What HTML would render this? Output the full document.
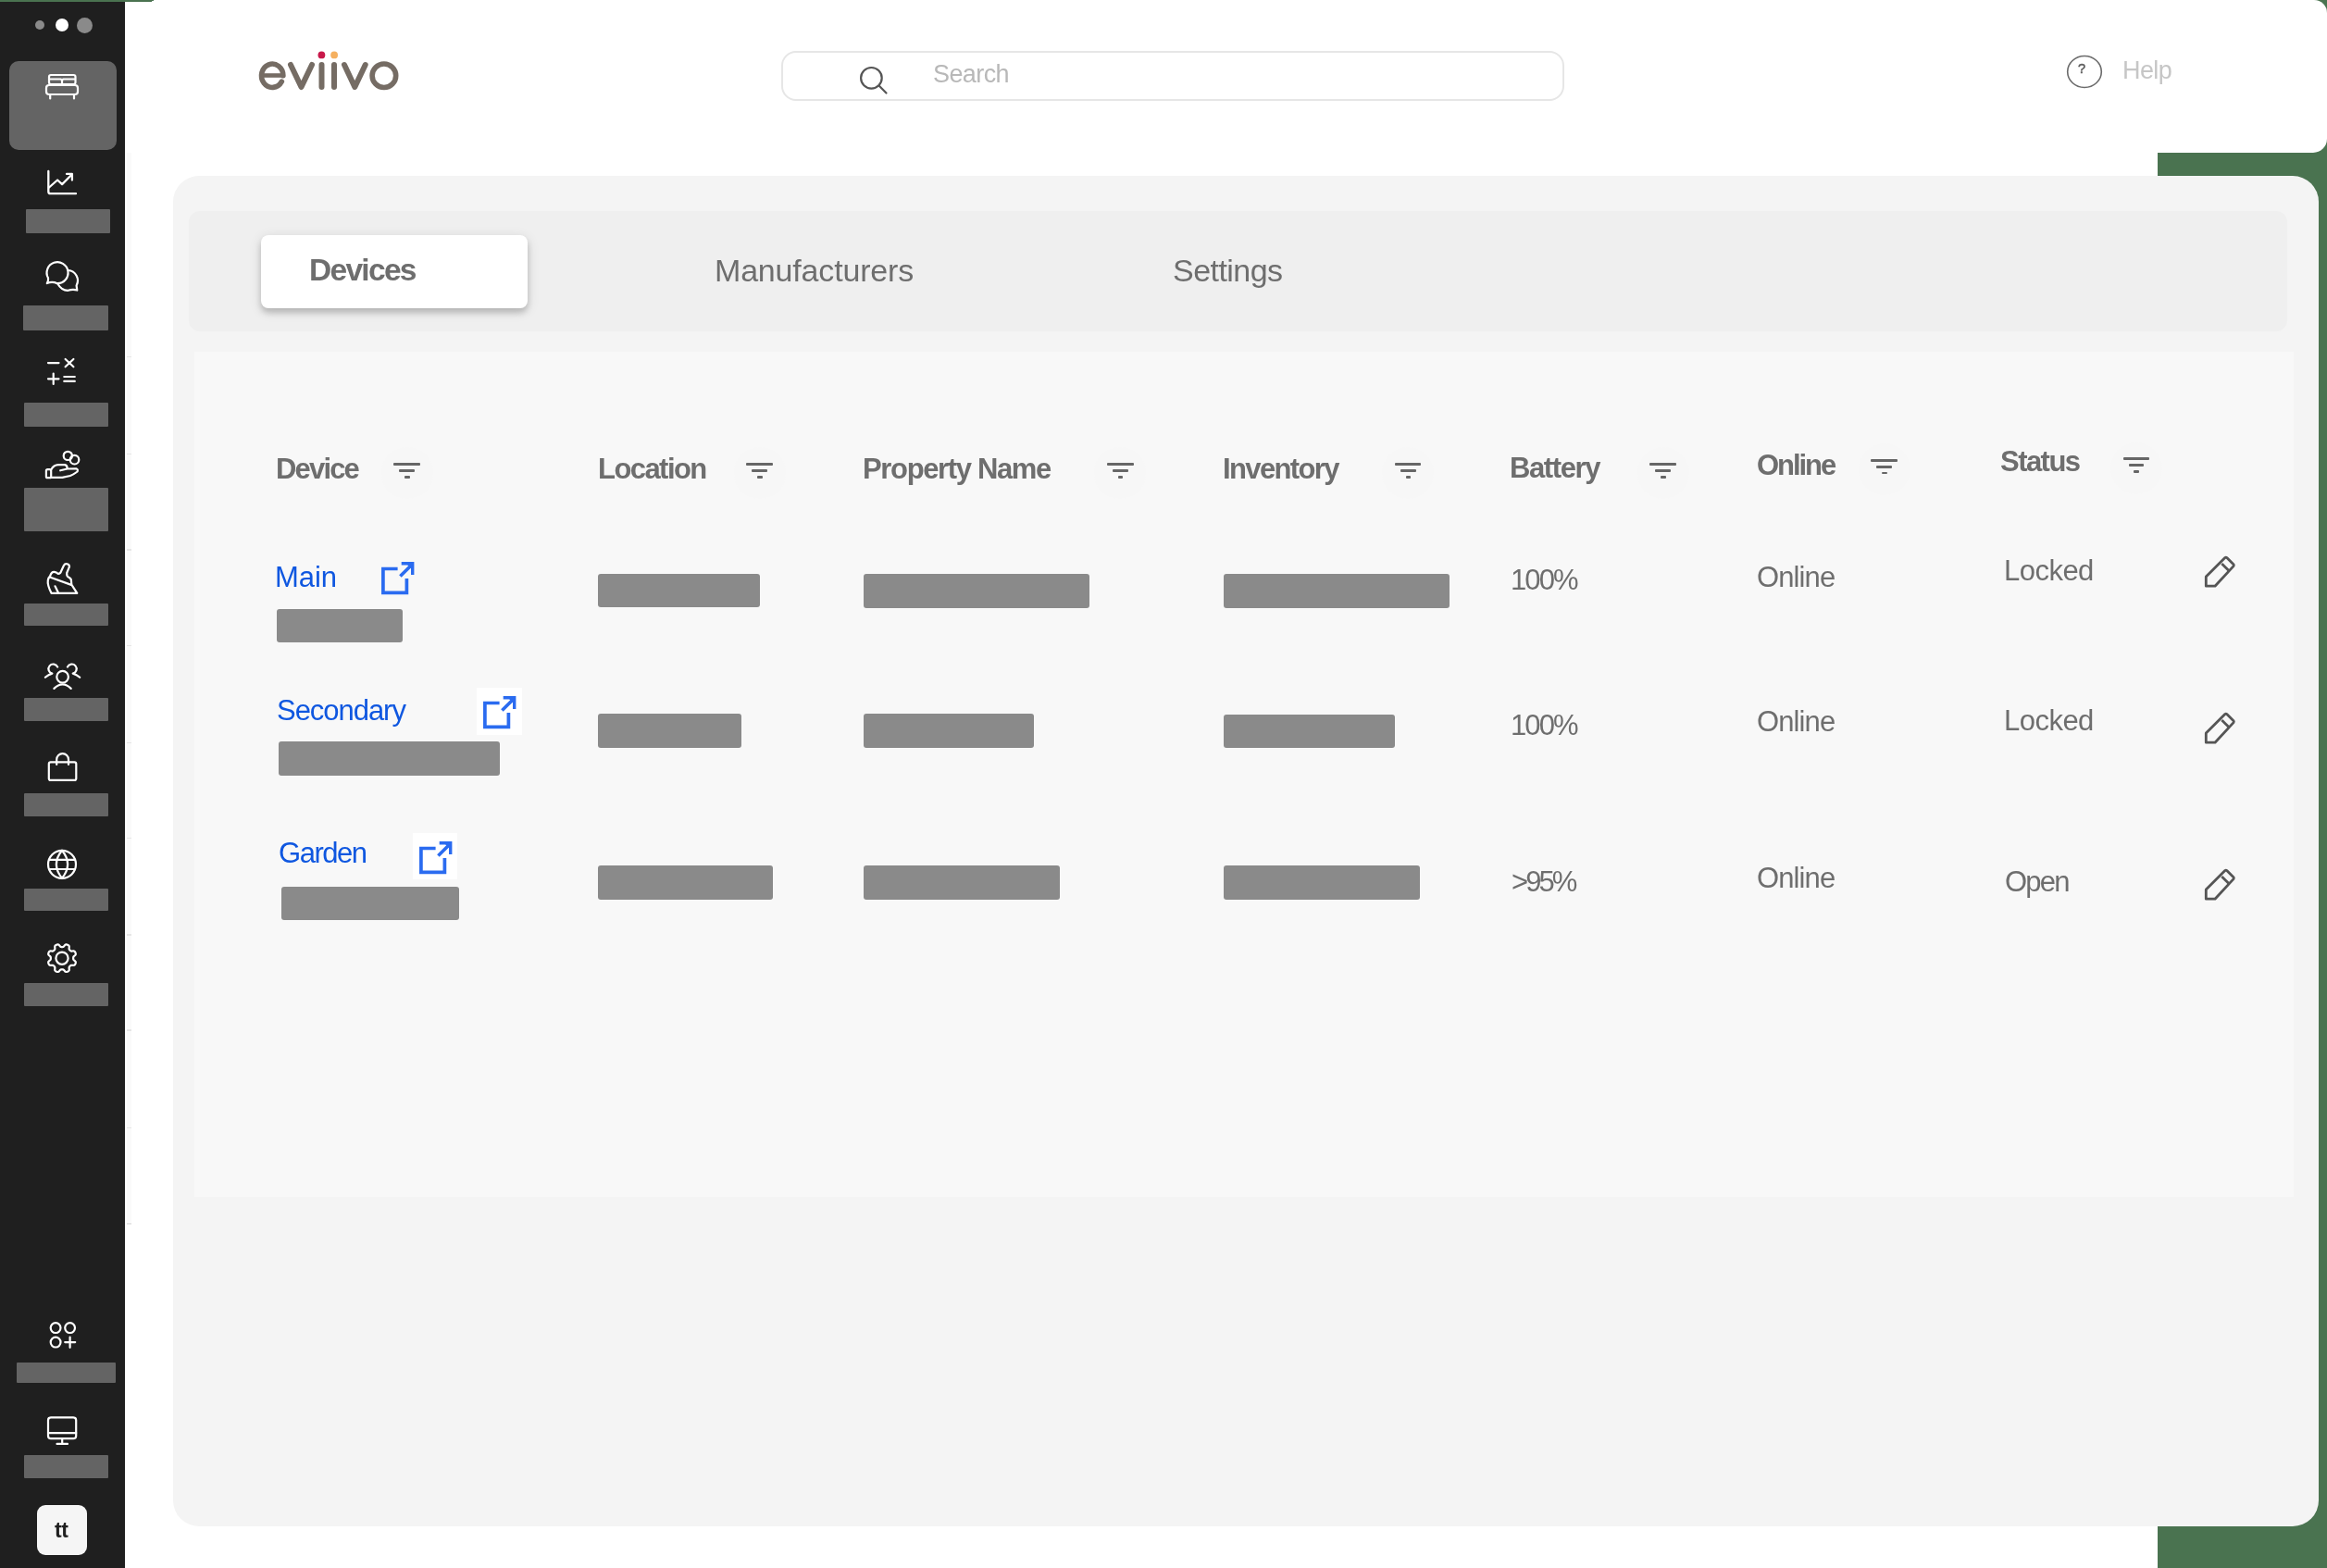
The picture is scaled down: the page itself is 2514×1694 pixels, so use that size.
<!DOCTYPE html>
<html><head><meta charset="utf-8"><style>
html,body{margin:0;padding:0;}
body{width:2514px;height:1694px;position:relative;overflow:hidden;background:#ffffff;font-family:"Liberation Sans",sans-serif;}
.r{position:absolute;}
.t{position:absolute;white-space:nowrap;will-change:transform;}
</style></head><body>
<div class="r" style="left:2331.0px;top:0.0px;width:183.0px;height:1694.0px;background:#4a7350;border-radius:0px;"></div>
<div class="r" style="left:0.0px;top:2.0px;width:135.0px;height:1692.0px;background:#1f1f1f;border-radius:0px;"></div>
<div class="r" style="left:135.0px;top:0.0px;width:2378.5px;height:165.0px;background:#ffffff;border-radius:0px;border-radius:0 14px 15px 0;"></div>
<div class="r" style="left:0.0px;top:0.0px;width:164.0px;height:2.0px;background:#4a7350;border-radius:0px;"></div>
<div class="r" style="left:164.0px;top:0.0px;width:2.0px;height:1.0px;background:#4a7350;border-radius:0px;"></div>
<div class="r" style="left:137.0px;top:165.0px;width:5.0px;height:1155.0px;background:#fafafa;border-radius:0px;"></div>
<div class="r" style="left:137.0px;top:385.1px;width:5.0px;height:1.4px;background:#e6e6e6;border-radius:0px;"></div>
<div class="r" style="left:137.0px;top:489.6px;width:5.0px;height:1.4px;background:#e6e6e6;border-radius:0px;"></div>
<div class="r" style="left:137.0px;top:593.3px;width:5.0px;height:1.4px;background:#e6e6e6;border-radius:0px;"></div>
<div class="r" style="left:137.0px;top:696.8px;width:5.0px;height:1.4px;background:#e6e6e6;border-radius:0px;"></div>
<div class="r" style="left:137.0px;top:802.0px;width:5.0px;height:1.4px;background:#e6e6e6;border-radius:0px;"></div>
<div class="r" style="left:137.0px;top:904.8px;width:5.0px;height:1.4px;background:#e6e6e6;border-radius:0px;"></div>
<div class="r" style="left:137.0px;top:1009.3px;width:5.0px;height:1.4px;background:#e6e6e6;border-radius:0px;"></div>
<div class="r" style="left:137.0px;top:1112.3px;width:5.0px;height:1.4px;background:#e6e6e6;border-radius:0px;"></div>
<div class="r" style="left:137.0px;top:1217.8px;width:5.0px;height:1.4px;background:#e6e6e6;border-radius:0px;"></div>
<div class="r" style="left:137.0px;top:1321.3px;width:5.0px;height:1.4px;background:#e6e6e6;border-radius:0px;"></div>
<div class="r" style="left:187.0px;top:190.0px;width:2318.0px;height:1458.5px;background:#f4f4f4;border-radius:28px;"></div>
<div class="r" style="left:204.0px;top:228.0px;width:2267.0px;height:130.0px;background:#efefef;border-radius:12px;"></div>
<div class="r" style="left:282.0px;top:254.0px;width:288.0px;height:78.5px;background:#ffffff;border-radius:8px;box-shadow:0 5px 6px rgba(0,0,0,0.17),0 3px 14px rgba(0,0,0,0.12);"></div>
<div class="r" style="left:210.0px;top:380.0px;width:2268.0px;height:913.0px;background:#f8f8f8;border-radius:0px;"></div>
<div class="r" style="left:38px;top:22px;width:10px;height:10px;border-radius:50%;background:#8a8a8a"></div>
<div class="r" style="left:60px;top:20px;width:14px;height:14px;border-radius:50%;background:#ffffff"></div>
<div class="r" style="left:82.5px;top:18.5px;width:17px;height:17px;border-radius:50%;background:#8a8a8a"></div>
<div class="r" style="left:9.5px;top:66.0px;width:116.2px;height:96.0px;background:#646464;border-radius:10px;"></div>
<div class="r" style="left:27.5px;top:226.0px;width:91.1px;height:26.0px;background:#646464;border-radius:1px;"></div>
<div class="r" style="left:25.0px;top:330.0px;width:92.0px;height:27.0px;background:#646464;border-radius:1px;"></div>
<div class="r" style="left:25.5px;top:434.7px;width:91.1px;height:26.3px;background:#646464;border-radius:1px;"></div>
<div class="r" style="left:25.5px;top:527.0px;width:91.1px;height:46.6px;background:#646464;border-radius:1px;"></div>
<div class="r" style="left:25.5px;top:652.0px;width:91.1px;height:24.0px;background:#646464;border-radius:1px;"></div>
<div class="r" style="left:25.5px;top:754.0px;width:91.1px;height:25.0px;background:#646464;border-radius:1px;"></div>
<div class="r" style="left:25.5px;top:856.7px;width:91.1px;height:25.0px;background:#646464;border-radius:1px;"></div>
<div class="r" style="left:25.5px;top:960.0px;width:91.1px;height:24.0px;background:#646464;border-radius:1px;"></div>
<div class="r" style="left:25.5px;top:1062.0px;width:91.1px;height:24.6px;background:#646464;border-radius:1px;"></div>
<div class="r" style="left:17.6px;top:1471.6px;width:107.4px;height:22.8px;background:#646464;border-radius:1px;"></div>
<div class="r" style="left:26.0px;top:1572.0px;width:90.6px;height:24.6px;background:#646464;border-radius:1px;"></div>
<div class="r" style="left:39.6px;top:1625.6px;width:54.8px;height:54.4px;background:#f5f5f5;border-radius:9px;"></div>
<div class="t" style="left:58.5px;top:1641.5px;font-size:23.00px;line-height:23.00px;color:#1f1f1f;font-weight:700;letter-spacing:-0.50px;">tt</div>
<svg class="r" style="left:0;top:0" width="135" height="1694" viewBox="0 0 135 1694" fill="none" stroke="#ffffff" stroke-width="2.2" stroke-linecap="round" stroke-linejoin="round">
<rect x="53" y="81" width="28.5" height="10" rx="2"/>
<path d="M53.5,85.5 H66 L67,87 L68,85.5 H81"/>
<path d="M67,86 V91"/>
<rect x="50" y="92" width="34" height="10" rx="3"/>
<path d="M54.2,102.5 V106.5 M80,102.5 V106.5"/>
<path d="M52.3,185 V207 Q52.3,209.2 54.5,209.2 H82" stroke-width="2.3"/>
<path d="M53,202.5 L62.1,194.5 L67.1,199.1 L77.9,188.2 M72,187.9 H77.9 V194.5" stroke-width="2.3"/>
<path d="M52,300.3 A11.5,11.5 0 1 1 61.8,306.2 Q56.5,303.6 50.8,306 Q52.6,303.3 52,300.3 Z"/>
<path d="M73.6,292 A11.2,11.2 0 0 1 82.6,308.5 L83.3,313.6 Q79,311.9 73.5,313.8 Q66.5,314 62.3,306.5"/>
<path d="M52,392.1 H63.5 M70.6,388 L79.4,396.3 M79.4,388 L70.6,396.3 M52,409.3 H63.5 M57.7,403.6 V415 M69.3,407 H80.8 M69.3,411.9 H80.8" stroke-width="2.2"/>
<circle cx="73.3" cy="492.4" r="4.6"/>
<circle cx="80.5" cy="496.7" r="4.8"/>
<rect x="49.9" y="507.2" width="5.3" height="9" rx="1.5"/>
<path d="M55.2,507.5 Q58,502.3 63,502.2 H70 Q72.7,502.5 72.7,506.5 L65.2,508.3 M72.7,506.5 L82.3,506.3 Q84.5,507 83.6,509.5 Q80,512.3 75.9,514 L67.3,515.8 H55.2"/>
<path d="M54.1,622.4 Q55.5,617.6 58.5,617.8 Q61,618.2 62.6,619.8 Q65.3,620 66,617.2 L69,610.8 A3.2,3.2 0 0 1 75,612.2 L72.2,619 Q71.6,622.6 74.8,624 Q77.2,625.2 77,628 L77.3,631.6 L83.3,640.8 H55.5 Q51,632 51.8,627 Q52.3,624 54.1,622.4 Z"/>
<path d="M53.8,623.5 L77,631.9 M59.5,633.3 L63,640.5"/>
<circle cx="67.6" cy="731.2" r="6.3"/>
<path d="M58.4,743.9 Q67.6,735 76.7,743.9"/>
<path d="M62.2,720.6 A5.1,5.1 0 1 0 56.4,727.6 Q52.4,728.6 48.9,731.8"/>
<path d="M72.9,720.6 A5.1,5.1 0 1 1 78.7,727.6 Q82.7,728.6 86.2,731.8"/>
<rect x="52.8" y="823.3" width="29.5" height="19.6" rx="2"/>
<path d="M61.2,826 V820.5 A6.4,6.4 0 0 1 74,820.5 V826"/>
<circle cx="67" cy="933.8" r="15"/>
<path d="M67,918.8 Q54.8,933.8 67,948.8 M67,918.8 Q79.2,933.8 67,948.8"/>
<path d="M53,928.9 H81 M53,939 H81"/>
<path d="M79.15,1035.20 L79.15,1035.52 L79.17,1035.84 L79.20,1036.16 L79.29,1036.49 L79.47,1036.84 L79.81,1037.23 L80.33,1037.67 L80.93,1038.16 L81.42,1038.66 L81.71,1039.14 L81.81,1039.59 L81.80,1040.01 L81.72,1040.41 L81.60,1040.81 L81.46,1041.19 L81.29,1041.56 L81.09,1041.92 L80.86,1042.26 L80.57,1042.57 L80.18,1042.81 L79.65,1042.95 L78.95,1042.96 L78.17,1042.88 L77.49,1042.82 L76.98,1042.86 L76.60,1042.98 L76.31,1043.15 L76.05,1043.35 L75.82,1043.57 L75.59,1043.79 L75.37,1044.02 L75.15,1044.25 L74.95,1044.51 L74.78,1044.80 L74.66,1045.18 L74.62,1045.69 L74.68,1046.37 L74.76,1047.15 L74.75,1047.85 L74.61,1048.38 L74.37,1048.77 L74.06,1049.06 L73.72,1049.29 L73.36,1049.49 L72.99,1049.66 L72.61,1049.80 L72.21,1049.92 L71.81,1050.00 L71.39,1050.01 L70.94,1049.91 L70.46,1049.62 L69.96,1049.13 L69.47,1048.53 L69.03,1048.01 L68.64,1047.67 L68.29,1047.49 L67.96,1047.40 L67.64,1047.37 L67.32,1047.35 L67.00,1047.35 L66.68,1047.35 L66.36,1047.37 L66.04,1047.40 L65.71,1047.49 L65.36,1047.67 L64.97,1048.01 L64.53,1048.53 L64.04,1049.13 L63.54,1049.62 L63.06,1049.91 L62.61,1050.01 L62.19,1050.00 L61.79,1049.92 L61.39,1049.80 L61.01,1049.66 L60.64,1049.49 L60.28,1049.29 L59.94,1049.06 L59.63,1048.77 L59.39,1048.38 L59.25,1047.85 L59.24,1047.15 L59.32,1046.37 L59.38,1045.69 L59.34,1045.18 L59.22,1044.80 L59.05,1044.51 L58.85,1044.25 L58.63,1044.02 L58.41,1043.79 L58.18,1043.57 L57.95,1043.35 L57.69,1043.15 L57.40,1042.98 L57.02,1042.86 L56.51,1042.82 L55.83,1042.88 L55.05,1042.96 L54.35,1042.95 L53.82,1042.81 L53.43,1042.57 L53.14,1042.26 L52.91,1041.92 L52.71,1041.56 L52.54,1041.19 L52.40,1040.81 L52.28,1040.41 L52.20,1040.01 L52.19,1039.59 L52.29,1039.14 L52.58,1038.66 L53.07,1038.16 L53.67,1037.67 L54.19,1037.23 L54.53,1036.84 L54.71,1036.49 L54.80,1036.16 L54.83,1035.84 L54.85,1035.52 L54.85,1035.20 L54.85,1034.88 L54.83,1034.56 L54.80,1034.24 L54.71,1033.91 L54.53,1033.56 L54.19,1033.17 L53.67,1032.73 L53.07,1032.24 L52.58,1031.74 L52.29,1031.26 L52.19,1030.81 L52.20,1030.39 L52.28,1029.99 L52.40,1029.59 L52.54,1029.21 L52.71,1028.84 L52.91,1028.48 L53.14,1028.14 L53.43,1027.83 L53.82,1027.59 L54.35,1027.45 L55.05,1027.44 L55.83,1027.52 L56.51,1027.58 L57.02,1027.54 L57.40,1027.42 L57.69,1027.25 L57.95,1027.05 L58.18,1026.83 L58.41,1026.61 L58.63,1026.38 L58.85,1026.15 L59.05,1025.89 L59.22,1025.60 L59.34,1025.22 L59.38,1024.71 L59.32,1024.03 L59.24,1023.25 L59.25,1022.55 L59.39,1022.02 L59.63,1021.63 L59.94,1021.34 L60.28,1021.11 L60.64,1020.91 L61.01,1020.74 L61.39,1020.60 L61.79,1020.48 L62.19,1020.40 L62.61,1020.39 L63.06,1020.49 L63.54,1020.78 L64.04,1021.27 L64.53,1021.87 L64.97,1022.39 L65.36,1022.73 L65.71,1022.91 L66.04,1023.00 L66.36,1023.03 L66.68,1023.05 L67.00,1023.05 L67.32,1023.05 L67.64,1023.03 L67.96,1023.00 L68.29,1022.91 L68.64,1022.73 L69.03,1022.39 L69.47,1021.87 L69.96,1021.27 L70.46,1020.78 L70.94,1020.49 L71.39,1020.39 L71.81,1020.40 L72.21,1020.48 L72.61,1020.60 L72.99,1020.74 L73.36,1020.91 L73.72,1021.11 L74.06,1021.34 L74.37,1021.63 L74.61,1022.02 L74.75,1022.55 L74.76,1023.25 L74.68,1024.03 L74.62,1024.71 L74.66,1025.22 L74.78,1025.60 L74.95,1025.89 L75.15,1026.15 L75.37,1026.38 L75.59,1026.61 L75.82,1026.83 L76.05,1027.05 L76.31,1027.25 L76.60,1027.42 L76.98,1027.54 L77.49,1027.58 L78.17,1027.52 L78.95,1027.44 L79.65,1027.45 L80.18,1027.59 L80.57,1027.83 L80.86,1028.14 L81.09,1028.48 L81.29,1028.84 L81.46,1029.21 L81.60,1029.59 L81.72,1029.99 L81.80,1030.39 L81.81,1030.81 L81.71,1031.26 L81.42,1031.74 L80.93,1032.24 L80.33,1032.73 L79.81,1033.17 L79.47,1033.56 L79.29,1033.91 L79.20,1034.24 L79.17,1034.56 L79.15,1034.88 L79.15,1035.20Z"/>
<circle cx="67" cy="1035.2" r="6.6"/>
<circle cx="60.1" cy="1434.6" r="5.4" stroke-width="2.2"/>
<circle cx="75.6" cy="1434.6" r="5.4" stroke-width="2.2"/>
<circle cx="60.1" cy="1450.1" r="5.4" stroke-width="2.2"/>
<path d="M70.2,1450.1 H81.2 M75.6,1444.5 V1455.8" stroke-width="2.2"/>
<rect x="52" y="1531.4" width="30.2" height="22.8" rx="3"/>
<path d="M52,1548.1 H82.2 M67.2,1554.5 V1559.6 M61.5,1559.9 H73"/>
</svg>
<svg class="r" style="left:0;top:0" width="500" height="140" viewBox="0 0 500 140" fill="none" stroke="#756c64" stroke-width="6" stroke-linecap="round" stroke-linejoin="round">
<path d="M284,81.5 H305.9" stroke-width="4.6" stroke-linecap="butt"/>
<path d="M305.9,81.8 A11.7,12.7 0 1 0 304.3,88.15" stroke-width="5.6"/>
<path d="M314,70 L325.5,94 L337,70 M347.5,70 V94 M361,70 V94 M372,70 L383.3,94 L394.7,70"/>
<circle cx="414.9" cy="81.75" r="12.8" stroke-width="5.6"/>
<circle cx="347.4" cy="59.4" r="3.9" fill="#c8184a" stroke="none"/>
<circle cx="361.1" cy="59.4" r="3.9" fill="#f5b060" stroke="none"/>
</svg>
<div class="r" style="left:844.4px;top:55.3px;width:846px;height:54px;box-sizing:border-box;border:2.5px solid #e6e6e6;border-radius:16px;background:#fff"></div>
<svg class="r" style="left:0;top:0" width="1000" height="120" viewBox="0 0 1000 120" fill="none" stroke="#555" stroke-width="2.2" stroke-linecap="round">
<circle cx="941.4" cy="84.3" r="11.3"/><path d="M949.6,92.5 L957.5,100.5"/></svg>
<div class="t" style="left:1008.0px;top:66.7px;font-size:27.00px;line-height:27.00px;color:#b8b8b8;font-weight:400;letter-spacing:-0.60px;">Search</div>
<svg class="r" style="left:2200px;top:0" width="120" height="120" viewBox="2200 0 120 120" fill="none" stroke="#6b6b6b" stroke-width="1.6">
<ellipse cx="2252" cy="77.5" rx="18.3" ry="17"/></svg>
<div class="t" style="left:2244.8px;top:66.7px;font-size:14.50px;line-height:14.50px;color:#5a5a5a;font-weight:400;letter-spacing:0.00px;-webkit-text-stroke:0.5px #5a5a5a;">?</div>
<div class="t" style="left:2293.3px;top:63.4px;font-size:27.00px;line-height:27.00px;color:#c6c6c6;font-weight:400;letter-spacing:-0.60px;">Help</div>
<div class="t" style="left:334.0px;top:274.6px;font-size:33.50px;line-height:33.50px;color:#6e6e6e;font-weight:700;letter-spacing:-1.70px;">Devices</div>
<div class="t" style="left:771.5px;top:274.7px;font-size:34.00px;line-height:34.00px;color:#6e6e6e;font-weight:400;letter-spacing:-0.18px;">Manufacturers</div>
<div class="t" style="left:1267.0px;top:274.7px;font-size:34.00px;line-height:34.00px;color:#6e6e6e;font-weight:400;letter-spacing:-0.54px;">Settings</div>
<div class="r" style="left:411.5px;top:483.4px;width:56px;height:56px;border-radius:50%;background:#f7f7f7"></div>
<div class="t" style="left:298.1px;top:491.0px;font-size:31.00px;line-height:31.00px;color:#6e6e6e;font-weight:700;letter-spacing:-1.82px;">Device</div>
<div class="r" style="left:425.3px;top:499.9px;width:28.5px;height:3.0px;background:#666;border-radius:1px;"></div><div class="r" style="left:431.2px;top:507.0px;width:16.9px;height:3.0px;background:#666;border-radius:1px;"></div><div class="r" style="left:437.0px;top:514.1px;width:5.5px;height:2.6px;background:#666;border-radius:1px;"></div>
<div class="r" style="left:792.5px;top:483.4px;width:56px;height:56px;border-radius:50%;background:#f7f7f7"></div>
<div class="t" style="left:645.5px;top:491.0px;font-size:31.00px;line-height:31.00px;color:#6e6e6e;font-weight:700;letter-spacing:-1.56px;">Location</div>
<div class="r" style="left:806.3px;top:499.9px;width:28.5px;height:3.0px;background:#666;border-radius:1px;"></div><div class="r" style="left:812.2px;top:507.0px;width:16.9px;height:3.0px;background:#666;border-radius:1px;"></div><div class="r" style="left:818.0px;top:514.1px;width:5.5px;height:2.6px;background:#666;border-radius:1px;"></div>
<div class="r" style="left:1182.2px;top:483.4px;width:56px;height:56px;border-radius:50%;background:#f7f7f7"></div>
<div class="t" style="left:931.5px;top:491.1px;font-size:31.00px;line-height:31.00px;color:#6e6e6e;font-weight:700;letter-spacing:-1.35px;">Property Name</div>
<div class="r" style="left:1196.0px;top:499.9px;width:28.5px;height:3.0px;background:#666;border-radius:1px;"></div><div class="r" style="left:1201.9px;top:507.0px;width:16.9px;height:3.0px;background:#666;border-radius:1px;"></div><div class="r" style="left:1207.7px;top:514.1px;width:5.5px;height:2.6px;background:#666;border-radius:1px;"></div>
<div class="r" style="left:1493.0px;top:483.4px;width:56px;height:56px;border-radius:50%;background:#f7f7f7"></div>
<div class="t" style="left:1320.9px;top:491.1px;font-size:31.00px;line-height:31.00px;color:#6e6e6e;font-weight:700;letter-spacing:-1.63px;">Inventory</div>
<div class="r" style="left:1506.8px;top:499.9px;width:28.5px;height:3.0px;background:#666;border-radius:1px;"></div><div class="r" style="left:1512.7px;top:507.0px;width:16.9px;height:3.0px;background:#666;border-radius:1px;"></div><div class="r" style="left:1518.5px;top:514.1px;width:5.5px;height:2.6px;background:#666;border-radius:1px;"></div>
<div class="r" style="left:1768.5px;top:483.4px;width:56px;height:56px;border-radius:50%;background:#f7f7f7"></div>
<div class="t" style="left:1631.2px;top:490.3px;font-size:31.00px;line-height:31.00px;color:#6e6e6e;font-weight:700;letter-spacing:-1.40px;">Battery</div>
<div class="r" style="left:1782.3px;top:499.9px;width:28.5px;height:3.0px;background:#666;border-radius:1px;"></div><div class="r" style="left:1788.2px;top:507.0px;width:16.9px;height:3.0px;background:#666;border-radius:1px;"></div><div class="r" style="left:1794.0px;top:514.1px;width:5.5px;height:2.6px;background:#666;border-radius:1px;"></div>
<div class="r" style="left:2007.6000000000001px;top:479.0px;width:56px;height:56px;border-radius:50%;background:#f7f7f7"></div>
<div class="t" style="left:1897.9px;top:486.5px;font-size:31.00px;line-height:31.00px;color:#6e6e6e;font-weight:700;letter-spacing:-2.06px;">Online</div>
<div class="r" style="left:2021.4px;top:495.5px;width:28.5px;height:3.0px;background:#666;border-radius:1px;"></div><div class="r" style="left:2027.3px;top:502.6px;width:16.9px;height:3.0px;background:#666;border-radius:1px;"></div><div class="r" style="left:2033.1px;top:509.7px;width:5.5px;height:2.6px;background:#666;border-radius:1px;"></div>
<div class="r" style="left:2279.7999999999997px;top:477.5px;width:56px;height:56px;border-radius:50%;background:#f7f7f7"></div>
<div class="t" style="left:2160.7px;top:483.3px;font-size:31.00px;line-height:31.00px;color:#6e6e6e;font-weight:700;letter-spacing:-1.54px;">Status</div>
<div class="r" style="left:2293.6px;top:494.0px;width:28.5px;height:3.0px;background:#666;border-radius:1px;"></div><div class="r" style="left:2299.5px;top:501.1px;width:16.9px;height:3.0px;background:#666;border-radius:1px;"></div><div class="r" style="left:2305.3px;top:508.2px;width:5.5px;height:2.6px;background:#666;border-radius:1px;"></div>
<div class="t" style="left:297.1px;top:608.2px;font-size:31.00px;line-height:31.00px;color:#0f57e0;font-weight:400;letter-spacing:-0.07px;">Main</div>
<svg class="r" style="left:408px;top:602.8px" width="45" height="45" viewBox="408 602.8 45 45" fill="none" stroke="#2a6bf0" stroke-width="3.7" stroke-linecap="butt">
<path d="M429.6,614.3 H413.9 V640.1999999999999 H439.4 V624.9"/>
<path d="M432.4,622.3 L443.5,611.1999999999999" stroke-width="3.6"/>
<path d="M433.7,608.5 H445.7 V620.6999999999999" stroke-width="3.4"/><path d="M438,607.8 H446.5 V616.3 Z" fill="#2a6bf0" stroke="none"/>
</svg>
<div class="r" style="left:298.8px;top:658.3px;width:136.7px;height:36.1px;background:#8a8a8a;border-radius:3px;"></div>
<div class="r" style="left:646.2px;top:620.2px;width:174.5px;height:36.3px;background:#8a8a8a;border-radius:3px;"></div>
<div class="r" style="left:932.5px;top:619.8px;width:244.3px;height:37.0px;background:#8a8a8a;border-radius:3px;"></div>
<div class="r" style="left:1321.8px;top:619.8px;width:244.0px;height:37.0px;background:#8a8a8a;border-radius:3px;"></div>
<div class="t" style="left:1632.0px;top:611.1px;font-size:31.00px;line-height:31.00px;color:#6e6e6e;font-weight:400;letter-spacing:-1.87px;">100%</div>
<div class="t" style="left:1897.6px;top:608.1px;font-size:31.00px;line-height:31.00px;color:#6e6e6e;font-weight:400;letter-spacing:-0.89px;">Online</div>
<div class="t" style="left:2165.1px;top:600.8px;font-size:31.00px;line-height:31.00px;color:#6e6e6e;font-weight:400;letter-spacing:-0.52px;">Locked</div>
<svg class="r" style="left:2370px;top:596px" width="60" height="45" viewBox="2370 596 60 45" fill="none" stroke="#555" stroke-width="2.8" stroke-linejoin="round">
<path d="M2383.3,623 L2403.8,602.6 Q2404.8,601.8 2405.8,602.6 L2413,609.7 Q2413.7,610.6 2413,611.6 L2393,633.2 L2383.3,633.2 Z"/>
<path d="M2400.3,609.1 L2408.7,617.2"/>
</svg>
<div class="t" style="left:298.9px;top:751.5px;font-size:31.00px;line-height:31.00px;color:#0f57e0;font-weight:400;letter-spacing:-1.04px;">Secondary</div>
<div class="r" style="left:515.2px;top:742.9px;width:49.2px;height:51.1px;background:#ffffff;border-radius:0px;"></div>
<svg class="r" style="left:517.9px;top:748px" width="45" height="45" viewBox="517.9 748 45 45" fill="none" stroke="#2a6bf0" stroke-width="3.7" stroke-linecap="butt">
<path d="M539.5,759.5 H523.8 V785.4 H549.3 V770.1"/>
<path d="M542.3,767.5 L553.4,756.4" stroke-width="3.6"/>
<path d="M543.6,753.7 H555.6 V765.9" stroke-width="3.4"/><path d="M547.9,753 H556.4 V761.5 Z" fill="#2a6bf0" stroke="none"/>
</svg>
<div class="r" style="left:301.1px;top:801.4px;width:238.6px;height:36.4px;background:#8a8a8a;border-radius:3px;"></div>
<div class="r" style="left:646.2px;top:771.3px;width:154.7px;height:36.6px;background:#8a8a8a;border-radius:3px;"></div>
<div class="r" style="left:932.5px;top:771.3px;width:184.7px;height:37.0px;background:#8a8a8a;border-radius:3px;"></div>
<div class="r" style="left:1321.8px;top:771.6px;width:185.0px;height:36.7px;background:#8a8a8a;border-radius:3px;"></div>
<div class="t" style="left:1632.0px;top:768.1px;font-size:31.00px;line-height:31.00px;color:#6e6e6e;font-weight:400;letter-spacing:-1.87px;">100%</div>
<div class="t" style="left:1897.6px;top:763.7px;font-size:31.00px;line-height:31.00px;color:#6e6e6e;font-weight:400;letter-spacing:-0.89px;">Online</div>
<div class="t" style="left:2165.1px;top:762.9px;font-size:31.00px;line-height:31.00px;color:#6e6e6e;font-weight:400;letter-spacing:-0.52px;">Locked</div>
<svg class="r" style="left:2370px;top:765.3px" width="60" height="45" viewBox="2370 765.3 60 45" fill="none" stroke="#555" stroke-width="2.8" stroke-linejoin="round">
<path d="M2383.3,792.3 L2403.8,771.9 Q2404.8,771.0999999999999 2405.8,771.9 L2413,779.0 Q2413.7,779.9 2413,780.9 L2393,802.5 L2383.3,802.5 Z"/>
<path d="M2400.3,778.4 L2408.7,786.5"/>
</svg>
<div class="t" style="left:301.3px;top:906.3px;font-size:31.00px;line-height:31.00px;color:#0f57e0;font-weight:400;letter-spacing:-1.46px;">Garden</div>
<div class="r" style="left:446.3px;top:900.3px;width:47.7px;height:49.5px;background:#ffffff;border-radius:0px;"></div>
<svg class="r" style="left:448.8px;top:904.6px" width="45" height="45" viewBox="448.8 904.6 45 45" fill="none" stroke="#2a6bf0" stroke-width="3.7" stroke-linecap="butt">
<path d="M470.40000000000003,916.1 H454.7 V942.0 H480.2 V926.7"/>
<path d="M473.2,924.1 L484.3,913.0" stroke-width="3.6"/>
<path d="M474.5,910.3000000000001 H486.5 V922.5" stroke-width="3.4"/><path d="M478.8,909.6 H487.3 V918.1 Z" fill="#2a6bf0" stroke="none"/>
</svg>
<div class="r" style="left:304.0px;top:957.6px;width:192.1px;height:36.3px;background:#8a8a8a;border-radius:3px;"></div>
<div class="r" style="left:646.2px;top:935.1px;width:188.7px;height:36.6px;background:#8a8a8a;border-radius:3px;"></div>
<div class="r" style="left:932.5px;top:935.2px;width:212.1px;height:36.7px;background:#8a8a8a;border-radius:3px;"></div>
<div class="r" style="left:1321.8px;top:935.2px;width:212.4px;height:36.7px;background:#8a8a8a;border-radius:3px;"></div>
<div class="t" style="left:1633.0px;top:937.4px;font-size:31.00px;line-height:31.00px;color:#6e6e6e;font-weight:400;letter-spacing:-2.93px;">&gt;95%</div>
<div class="t" style="left:1897.6px;top:932.8px;font-size:31.00px;line-height:31.00px;color:#6e6e6e;font-weight:400;letter-spacing:-0.89px;">Online</div>
<div class="t" style="left:2166.1px;top:937.4px;font-size:31.00px;line-height:31.00px;color:#6e6e6e;font-weight:400;letter-spacing:-1.74px;">Open</div>
<svg class="r" style="left:2370px;top:933.8px" width="60" height="45" viewBox="2370 933.8 60 45" fill="none" stroke="#555" stroke-width="2.8" stroke-linejoin="round">
<path d="M2383.3,960.8 L2403.8,940.4 Q2404.8,939.5999999999999 2405.8,940.4 L2413,947.5 Q2413.7,948.4 2413,949.4 L2393,971.0 L2383.3,971.0 Z"/>
<path d="M2400.3,946.9 L2408.7,955.0"/>
</svg>
</body></html>
